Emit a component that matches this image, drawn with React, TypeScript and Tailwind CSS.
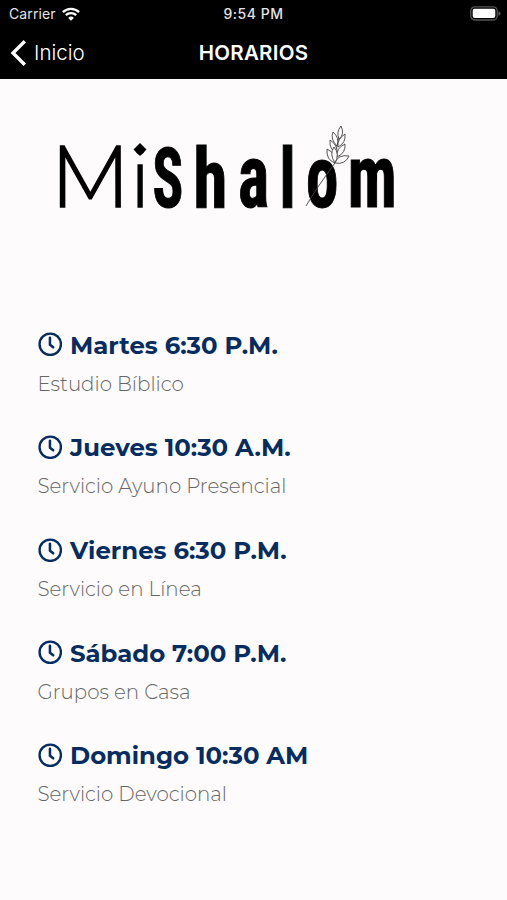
const schedule = [
  { time: "Martes 6:30 P.M.", event: "Estudio Bíblico" },
  { time: "Jueves 10:30 A.M.", event: "Servicio Ayuno Presencial" },
  { time: "Viernes 6:30 P.M.", event: "Servicio en Línea" },
  { time: "Sábado 7:00 P.M.", event: "Grupos en Casa" },
  { time: "Domingo 10:30 AM", event: "Servicio Devocional" },
];

function StatusBar() {
  return (
    <div className="grid h-[27px] grid-cols-[1fr_auto_1fr] items-center pr-[6px] pl-[9px] text-[14px] leading-none text-[#e4e4e4]">
      <div className="flex items-center gap-[6px]">
        <span className="tracking-[0.1px]">Carrier</span>
        <svg width="18" height="14" viewBox="0 0 18 14" fill="none" stroke="#fff" strokeWidth="2.3">
          <path d="M.9 5.1a11.6 11.6 0 0 1 16.2 0" />
          <path d="M3.8 8.2a7.5 7.5 0 0 1 10.4 0" />
          <path d="m9 13.8-2.8-2.9a4 4 0 0 1 5.6 0Z" fill="#fff" stroke="none" />
        </svg>
      </div>
      <span className="mr-[3px] text-center font-medium tracking-[0.5px] whitespace-nowrap">9:54 PM</span>
      <svg className="justify-self-end" width="31" height="15" viewBox="0 0 31 15">
        <rect x=".8" y=".8" width="26.4" height="13.2" rx="4" fill="none" stroke="#555" strokeWidth="1.3" />
        <rect x="2.7" y="2.7" width="22.6" height="9.4" rx="2" fill="#fff" />
        <path d="M28.4 5.2q2.2.6 2.2 2.3t-2.2 2.3Z" fill="#555" />
      </svg>
    </div>
  );
}

function NavBar() {
  return (
    <div className="grid h-[52px] grid-cols-[1fr_auto_1fr] items-center leading-none text-white">
      <button className="flex items-center gap-[7px] pl-[10px] text-left">
        <svg width="17" height="26" viewBox="0 0 17 26" fill="none" stroke="#fff" strokeWidth="3.4">
          <path d="M14.8 1.2 3 13l11.8 11.8" />
        </svg>
        <span className="text-[20.5px] font-light">Inicio</span>
      </button>
      <h1 className="text-[20.5px] font-semibold tracking-[0.25px]">HORARIOS</h1>
      <span />
    </div>
  );
}

type GlyphProps = { ch: string; x: number; size: number; sx: number };

function Glyph({ ch, x, size, sx }: GlyphProps) {
  return (
    <text
      transform={`translate(${x} 86.7) scale(${sx} 1)`}
      fontSize={size}
      stroke="#000"
      strokeWidth="1"
      className="font-['Roboto'] font-bold [font-stretch:75%]"
    >
      {ch}
    </text>
  );
}

function Logo() {
  return (
    <svg role="img" aria-label="MiShalom" className="overflow-visible" width="350" height="100" viewBox="0 0 350 100" fill="#000">
      <text transform="translate(.3 86.6) scale(.97 1)" fontSize="86.5" stroke="#000" strokeWidth="1.4" className="font-['Montserrat'] font-light">M</text>
      <text x="80.7" y="86.6" fontSize="84" stroke="#000" strokeWidth="1.3" className="font-['Lato'] font-light">i</text>
      <path d="m90 23 6.5 6.5L90 36l-6.5-6.5Z" />
      <Glyph ch="S" x={102.4} size={84} sx={0.68} />
      <Glyph ch="h" x={143.6} size={84} sx={0.82} />
      <Glyph ch="a" x={188} size={88} sx={0.75} />
      <Glyph ch="l" x={229.5} size={84} sx={0.76} />
      <Glyph ch="o" x={256} size={88} sx={0.74} />
      <Glyph ch="m" x={297.8} size={88} sx={0.75} />
      <g fill="#fdfbfc" stroke="#444" strokeWidth=".9" strokeLinejoin="round">
        <path d="M256 86q7-12 14-22t17-24" fill="none" />
        <path d="M285 43q1-18 6-34" fill="none" />
        <path d="M291 6q-5 6-2 13 6-5 2-13Z" />
        <path d="M283 12q-3 7 4 14 3-8-4-14Z" />
        <path d="M295 14q-8 5-7 13 8-4 7-13Z" />
        <path d="M280 20q-1 9 7 14 1-9-7-14Z" />
        <path d="M295 24q-9 4-8 13 9-4 8-13Z" />
        <path d="M277 29q-1 11 8 14 2-9-8-14Z" />
        <path d="M284 27q-5 7 1 16 5-9-1-16Z" />
        <path d="M299 36q-11-2-14 7 10 2 14-7Z" />
      </g>
    </svg>
  );
}

function ClockIcon() {
  return (
    <svg width="24.5" height="24.5" viewBox="0 0 25 25" fill="none" stroke="#062d61">
      <circle cx="12.5" cy="12.5" r="10.9" strokeWidth="2.4" />
      <path d="M12.2 5.9v7l3.3 2.7" strokeWidth="2.6" strokeLinecap="round" strokeLinejoin="round" />
    </svg>
  );
}

export default function App() {
  return (
    <div className="flex h-[900px] w-[507px] flex-col overflow-hidden bg-[#fdfbfc] font-['Inter',sans-serif]">
      <header className="h-[79px] bg-black">
        <StatusBar />
        <NavBar />
      </header>
      <main className="flex flex-col pt-[41px]">
        <div className="pl-[50px]">
          <Logo />
        </div>
        <ul className="mt-[108.5px] flex flex-col gap-[22.7px] pl-[37.5px] font-['Montserrat',sans-serif]">
          {schedule.map(({ time, event }) => (
            <li key={time} className="flex h-[80px] flex-col">
              <h2 className="flex h-[32px] items-center gap-[8px] text-[24.4px] leading-[32px] font-bold whitespace-nowrap text-[#062d61]">
                <ClockIcon />
                {time}
              </h2>
              <p className="mt-[9px] text-[19.8px] leading-[28px] font-light text-[#666]">{event}</p>
            </li>
          ))}
        </ul>
      </main>
    </div>
  );
}
